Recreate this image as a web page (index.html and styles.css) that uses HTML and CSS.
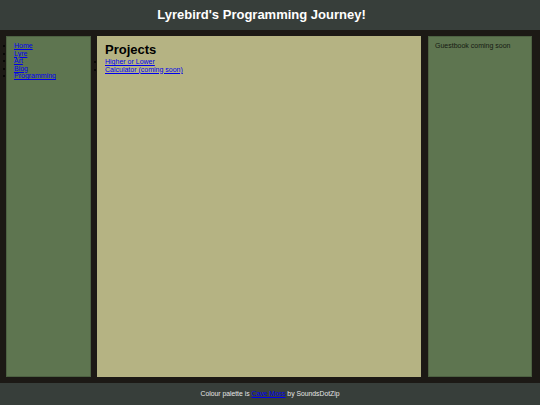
FILE: index.html
```html
<!DOCTYPE html>
<html>
<head>
<meta charset="utf-8">
<title>Lyrebird's Programming Journey!</title>
<link rel="stylesheet" href="styles.css">
</head>
<body>
<header class="site-header">Lyrebird's Programming Journey!</header>
<div class="layout">
  <nav class="sidebar nav">
    <ul class="nav-list">
      <li><a href="#">Home</a></li>
      <li><a href="#">Lyre</a></li>
      <li><a href="#">Art</a></li>
      <li><a href="#">Blog</a></li>
      <li><a href="#">Programming</a></li>
    </ul>
  </nav>
  <main class="content">
    <h2 class="content-title">Projects</h2>
    <ul class="project-list">
      <li><a href="#">Higher or Lower</a></li>
      <li><a href="#">Calculator (coming soon)</a></li>
    </ul>
  </main>
  <aside class="sidebar guestbook">Guestbook coming soon</aside>
</div>
<footer class="site-footer">Colour palette is <a href="#">Cave Moss</a> by SoundsDotZip</footer>
</body>
</html>
```
FILE: styles.css
```css
html, body {
  margin: 0;
  padding: 0;
}
body {
  background: #1c1915;
  font-family: "Liberation Sans", Arial, sans-serif;
  width: 540px;
  height: 405px;
  overflow: hidden;
}
a {
  color: #0000ee;
}
.site-header {
  height: 30px;
  background: #373e3a;
  color: #ffffff;
  font-weight: bold;
  font-size: 13px;
  line-height: 30px;
  text-align: center;
  padding-right: 17px;
}
.layout {
  display: grid;
  grid-template-columns: 85px 324px 105px;
  column-gap: 6px;
  padding: 6px 7px 6px 6px;
  height: 341px;
}
.layout > .guestbook {
  margin-left: 1px;
}
.sidebar {
  background: #5e7550;
  box-sizing: border-box;
  border: 1px solid #4d6142;
}
.nav {
  padding: 5px 0 0 0;
}
.nav-list {
  margin: 0;
  padding-left: 7px;
  font-size: 7px;
  line-height: 7.5px;
}
.content {
  background: #b5b383;
  padding: 6px 8px;
}
.content-title {
  margin: 0;
  font-size: 13px;
  line-height: 16px;
  color: #000;
}
.project-list {
  margin: 0;
  padding-left: 0;
  font-size: 7px;
  line-height: 7.5px;
}
.guestbook {
  padding: 5px 6px;
  font-size: 7px;
  line-height: 8px;
  color: #161a12;
}
.site-footer {
  height: 22px;
  background: #373e3a;
  color: #e6e6e6;
  font-size: 6.8px;
  line-height: 22px;
  text-align: center;
}
```
